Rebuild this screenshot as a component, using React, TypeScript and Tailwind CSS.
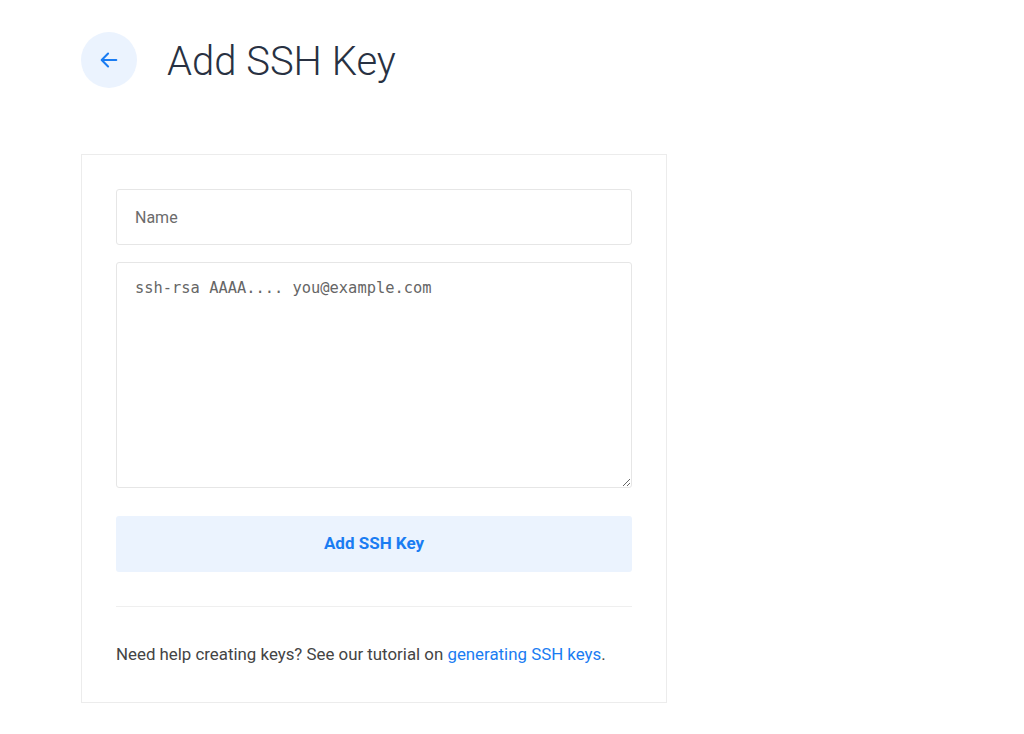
import React from "react";

export default function App() {
  return (
    <div className="min-h-[734px] w-full bg-white pl-[81px] pt-[32px]" style={{ fontFamily: "Roboto, 'Liberation Sans', sans-serif" }}>
      <div className="flex items-center gap-[30px]">
        <button className="flex h-[56px] w-[56px] items-center justify-center rounded-full bg-[#ebf3fe]">
          <svg width="22" height="22" viewBox="0 0 24 24" fill="none" stroke="#1a7cf2" strokeWidth="2.2" strokeLinecap="round" strokeLinejoin="round">
            <path d="M20 12H5" />
            <path d="M11 5l-7 7 7 7" />
          </svg>
        </button>
        <h1 className="mt-[3px] text-[40px] font-light leading-none text-[#283142]">Add SSH Key</h1>
      </div>

      <div className="mt-[66px] w-[586px] border border-[#ececec] p-[34px] pb-[35px]">
        <input
          placeholder="Name"
          className="block h-[56px] w-full rounded-[3px] border border-[#e6e6e6] px-[18px] text-[16px] text-[#333] placeholder:text-[#6b6b6b] outline-none"
        />
        <textarea
          placeholder="ssh-rsa AAAA.... you@example.com"
          className="mt-[17px] block h-[226px] w-full rounded-[3px] border border-[#e6e6e6] px-[18px] py-[14px] text-[15.4px] text-[#333] placeholder:text-[#666] outline-none"
          style={{ fontFamily: "'DejaVu Sans Mono', monospace" }}
        />
        <button className="mt-[28px] flex h-[56px] w-full items-center justify-center rounded-[3px] bg-[#ebf3fe] text-[17px] font-bold text-[#1a7cf2]">
          Add SSH Key
        </button>
        <div className="mt-[34px] h-px w-full bg-[#efefef]" />
        <p className="mt-[34px] text-[16.85px] leading-[26px] text-[#444]">
          Need help creating keys? See our tutorial on{" "}
          <a className="text-[#1a7cf2]" href="#">generating SSH keys</a>.
        </p>
      </div>
    </div>
  );
}
